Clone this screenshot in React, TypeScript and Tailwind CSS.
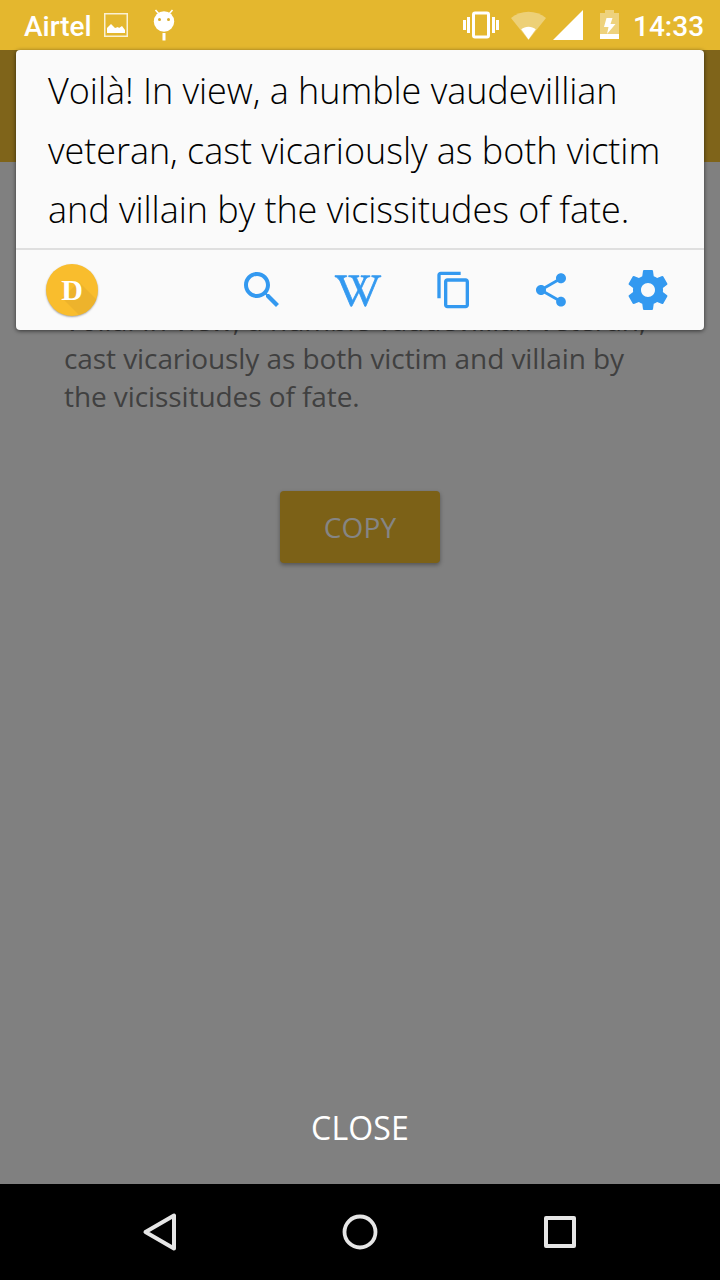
import React from "react";
import { FaWikipediaW } from "react-icons/fa";

function StatusBar() {
  return (
    <header className="flex h-[50px] shrink-0 items-center bg-[#e4b72e] pr-4 pl-6 font-['Roboto',sans-serif] text-white">
      <span className="w-[68px] pt-1 text-[28px] leading-8 font-medium whitespace-nowrap">Airtel</span>
      <svg className="ml-3 h-6 w-6" viewBox="0 0 24 24" fill="none">
        <rect x="0.75" y="0.75" width="22.5" height="22.5" stroke="#faf0d3" strokeWidth="1.5" />
        <path d="M3 20v-5l4-4 4 4 3-1 1 1 3-2 3 4v3z" fill="#fff" />
      </svg>
      <svg className="ml-[25px] h-8 w-[22px]" viewBox="0 0 22 32" fill="#fff">
        <circle cx="11" cy="12.500" r="10.2" />
        <path d="M2.5 1 6 5M19.5 1 16 5" stroke="#fff" strokeWidth="1.6" />
        <circle cx="6.5" cy="10.5" r="1.5" fill="#d8ac2b" />
        <circle cx="15.5" cy="10.5" r="1.5" fill="#d8ac2b" />
        <rect x="9.5" y="24" width="3" height="7.500" />
      </svg>
      <svg className="ml-auto h-7 w-9" viewBox="0 0 36 28" fill="#fff">
        <path d="M0 9h3v10H0zM4 6h3v16H4zM29 6h3v16h-3zM33 9h3v10h-3z" />
        <rect x="10.5" y="2" width="15" height="24" rx="1.5" fill="none" stroke="#fff" strokeWidth="3" />
      </svg>
      <svg className="ml-3 h-[30px] w-[35px]" viewBox="0 0 35 30" fill="#fff">
        <path d="M0 8C10-.4 25-.4 35 8L17.5 30z" opacity=".35" />
        <path d="M10.2 19.2c4-3.400 10.600-3.400 14.600 0L17.5 29.5z" />
      </svg>
      <svg className="ml-[7px] h-[30px] w-[30px]" viewBox="0 0 30 30" fill="#fff"><path d="M30 0v30H0z" /></svg>
      <svg className="ml-[17px] h-[30px] w-[19px]" viewBox="0 0 19 30" fill="#fff">
        <path d="M5 0h9v3h5v21H0V3h5z" opacity=".38" />
        <path d="M0 24h19v5H0zM6.500 8h6l-2 6h5L7 24l1.500-7H4z" />
      </svg>
      <span className="ml-[14px] w-[71px] pt-1 text-[28px] leading-8 font-medium whitespace-nowrap">14:33</span>
    </header>
  );
}

function Toolbar() {
  return (
    <div className="flex h-20 items-center border-t-2 border-[#dfdfdf] pt-0.5 text-[#3399f0]">
      <button aria-label="Dictionary" className="relative ml-[30px] flex h-[52px] w-[52px] items-center justify-center overflow-hidden rounded-full bg-[#f9bd2d] shadow-[0_1px_2px_rgba(0,0,0,0.35)]">
        <svg className="absolute inset-0 h-[52px] w-[52px]" viewBox="0 0 52 52">
          <path d="M16 34 33 18 52 37V52H34z" fill="#edb32c" />
        </svg>
        <span className="relative font-['Liberation_Serif',serif] text-[30px] leading-[30px] font-bold text-white">D</span>
      </button>
      <button aria-label="Search" className="ml-[140px] h-12 w-12">
        <svg className="h-12 w-12" viewBox="0 0 24 24" fill="currentColor"><path d="M15.500 14h-.79l-.28-.27C15.410 12.590 16 11.110 16 9.500 16 5.910 13.090 3 9.500 3S3 5.910 3 9.500 5.910 16 9.500 16c1.610 0 3.090-.59 4.230-1.570l.27.28v.79l5 4.990L20.490 19l-4.990-5zm-6 0C7.010 14 5 11.990 5 9.500S7.010 5 9.500 5 14 7.010 14 9.500 11.990 14 9.500 14z" /></svg>
      </button>
      <button aria-label="Wikipedia" className="ml-[49px] flex h-12 w-[46px] items-center justify-center pt-0.5">
        <FaWikipediaW className="h-[38px] w-[46px] overflow-visible [stroke-width:12px]" preserveAspectRatio="none" />
      </button>
      <button aria-label="Copy text" className="ml-[53px] h-10 w-10">
        <svg className="h-10 w-10" viewBox="0 0 24 24" fill="currentColor"><path d="M16 1H4c-1.100 0-2 .9-2 2v14h2V3h12V1zm3 4H8c-1.100 0-2 .9-2 2v14c0 1.100.9 2 2 2h11c1.100 0 2-.9 2-2V7c0-1.100-.9-2-2-2zm0 16H8V7h11v14z" /></svg>
      </button>
      <button aria-label="Share" className="ml-[57px] h-10 w-10">
        <svg className="h-10 w-10" viewBox="0 0 24 24" fill="currentColor"><path d="M18 16.080c-.76 0-1.440.3-1.960.77L8.910 12.700c.05-.23.09-.46.09-.7s-.04-.47-.09-.7l7.050-4.110c.54.5 1.250.81 2.040.81 1.660 0 3-1.340 3-3s-1.340-3-3-3-3 1.340-3 3c0 .24.040.47.090.7L8.040 9.810C7.500 9.310 6.790 9 6 9c-1.660 0-3 1.340-3 3s1.340 3 3 3c.79 0 1.500-.31 2.040-.81l7.120 4.160c-.05.21-.08.43-.08.65 0 1.610 1.310 2.920 2.920 2.920s2.920-1.310 2.920-2.920-1.310-2.920-2.920-2.920z" /></svg>
      </button>
      <button aria-label="Settings" className="ml-[53px] h-12 w-12">
        <svg className="h-12 w-12" viewBox="0 0 24 24" fill="currentColor"><path d="M19.430 12.980c.04-.32.070-.64.070-.98s-.03-.66-.07-.98l2.110-1.650c.19-.15.240-.42.120-.64l-2-3.460c-.12-.22-.39-.3-.61-.22l-2.490 1c-.52-.4-1.080-.73-1.690-.98l-.38-2.650C14.460 2.180 14.250 2 14 2h-4c-.25 0-.46.18-.49.42l-.38 2.650c-.61.25-1.170.59-1.690.98l-2.490-1c-.23-.09-.49 0-.61.22l-2 3.460c-.13.22-.07.49.12.64l2.110 1.650c-.04.32-.07.65-.07.98s.03.66.070.98l-2.110 1.650c-.19.15-.24.42-.12.64l2 3.460c.12.22.39.3.61.220l2.490-1c.52.4 1.080.73 1.690.98l.38 2.650c.03.24.24.42.49.42h4c.25 0 .46-.18.49-.42l.38-2.650c.61-.25 1.170-.59 1.690-.98l2.490 1c.23.09.49 0 .61-.22l2-3.460c.12-.22.070-.49-.12-.64l-2.110-1.650zM12 15.500c-1.930 0-3.500-1.570-3.500-3.500s1.570-3.500 3.500-3.500 3.500 1.570 3.500 3.500-1.570 3.500-3.500 3.500z" /></svg>
      </button>
    </div>
  );
}

function SelectionCard() {
  return (
    <section className="absolute top-0 right-4 left-4 flex h-[280px] flex-col rounded-[4px] bg-[#fafafa] shadow-[0_1px_4px_rgba(0,0,0,0.6)]">
      <p className="h-[198px] pt-[11px] pl-8 text-[36px] leading-[59.5px] font-light tracking-[-0.05px] whitespace-nowrap text-black">
        Voilà! In view, a humble vaudevillian<br />
        veteran, cast vicariously as both victim<br />
        and villain by the vicissitudes of fate.
      </p>
      <Toolbar />
    </section>
  );
}

function NavigationBar() {
  return (
    <nav className="flex h-24 shrink-0 items-center justify-between bg-black px-[140px]">
      <svg className="h-10 w-10" viewBox="0 0 40 40" fill="none" stroke="#e6e6e6" strokeWidth="4" strokeLinejoin="round"><path d="M5.500 20 34 3.500v33z" /></svg>
      <svg className="h-10 w-10" viewBox="0 0 40 40" fill="none" stroke="#e6e6e6" strokeWidth="3.8"><circle cx="20" cy="20" r="15.500" /></svg>
      <svg className="h-10 w-10" viewBox="0 0 40 40" fill="none" stroke="#e6e6e6" strokeWidth="4" strokeLinejoin="round"><rect x="6" y="6" width="28" height="28" /></svg>
    </nav>
  );
}

export default function App() {
  return (
    <div className="flex h-[1280px] w-[720px] flex-col overflow-hidden bg-[#808080] font-['Open_Sans',sans-serif]">
      <StatusBar />
      <main className="relative flex grow flex-col">
        <div className="h-28 shrink-0 bg-[#7f641a]" />
        <p className="mt-[139px] ml-16 text-[28px] leading-[38px] tracking-[-0.08px] whitespace-nowrap text-[#404040]">
          <span className="tracking-normal">Voilà! In view, a humble vaudevillian veteran,</span><br />
          cast vicariously as both victim and villain by<br />
          the vicissitudes of fate.
        </p>
        <button className="mt-[76px] flex h-[72px] w-40 items-center justify-center self-center rounded-[4px] bg-[#7c6117] text-[28px] tracking-[0.2px] text-[#858585] shadow-[0_2px_4px_rgba(0,0,0,0.35)]">
          COPY
        </button>
        <button className="mt-auto mb-8 h-12 self-center text-[32px] leading-[48px] tracking-[0.15px] text-white">CLOSE</button>
        <SelectionCard />
      </main>
      <NavigationBar />
    </div>
  );
}
